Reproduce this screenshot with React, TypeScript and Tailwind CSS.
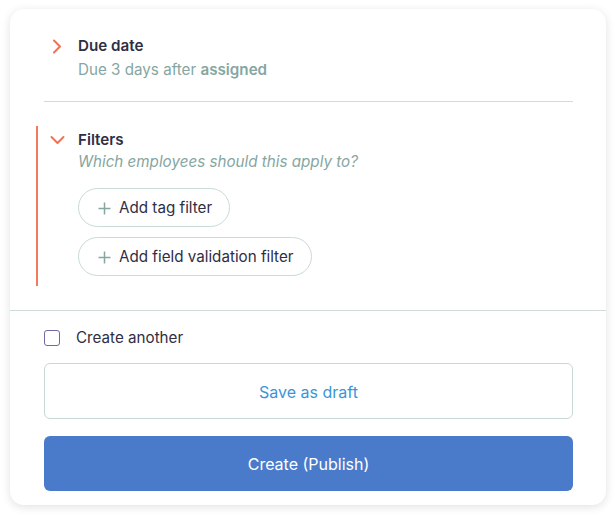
import { useState } from "react";

const ChevronRight = () => (
  <svg width="10" height="15" viewBox="0 0 10 15" fill="none">
    <path d="M2 1.5L8 7.5L2 13.5" stroke="#f4704f" strokeWidth="2" strokeLinecap="round" strokeLinejoin="round" />
  </svg>
);

const ChevronDown = () => (
  <svg width="15" height="10" viewBox="0 0 15 10" fill="none">
    <path d="M1.5 2L7.5 8L13.5 2" stroke="#f4704f" strokeWidth="2" strokeLinecap="round" strokeLinejoin="round" />
  </svg>
);

const Plus = () => (
  <svg width="13" height="13" viewBox="0 0 13 13" fill="none">
    <path d="M6.5 0.5V12.5M0.5 6.5H12.5" stroke="#86a6a2" strokeWidth="1.5" />
  </svg>
);

const FilterButton = ({ label }: { label: string }) => (
  <button className="flex h-[39px] w-fit items-center gap-[8px] rounded-full border border-[#c9dbd7] bg-white pl-[19px] pr-[17px] pt-px text-[15.2px] text-[#2f2e45]">
    <Plus />
    <span>{label}</span>
  </button>
);

const App = () => {
  const [another, setAnother] = useState(false);

  return (
    <div className="min-h-[516px] bg-white px-[10px] pt-[9px] font-['Inter',sans-serif]">
      <div className="h-[496px] w-[596px] rounded-[14px] bg-white shadow-[0_2px_10px_rgba(0,0,0,0.12)]">
        {/* Due date */}
        <div className="pl-[34px] pr-[33px] pt-[26px]">
          <div className="flex">
            <div className="w-[34px] pl-[8px] pt-[4px]">
              <ChevronRight />
            </div>
            <div>
              <div className="text-[15.2px] font-semibold leading-[22px] text-[#2f2e45]">Due date</div>
              <div className="mt-[2px] text-[15.2px] leading-[22px] text-[#86a6a2]">
                Due 3 days after <span className="font-semibold">assigned</span>
              </div>
            </div>
          </div>
          <div className="mt-[20px] h-px bg-[#cfdcda]" />
        </div>

        {/* Filters */}
        <div className="ml-[26px] mt-[24px] flex border-l-2 border-[#f47a5a] pb-[10px] pt-[2px]">
          <div className="w-[40px] pl-[12px] pt-[7px]">
            <ChevronDown />
          </div>
          <div>
            <div className="pt-px text-[15.2px] font-semibold leading-[22px] text-[#2f2e45]">Filters</div>
            <div className="text-[15.2px] italic leading-[22px] text-[#86a6a2]">
              Which employees should this apply to?
            </div>
            <div className="mt-[15px] flex flex-col gap-[10px]">
              <FilterButton label="Add tag filter" />
              <FilterButton label="Add field validation filter" />
            </div>
          </div>
        </div>

        <div className="mt-[24px] h-px bg-[#cfdcda]" />

        {/* Footer */}
        <div className="pl-[34px] pr-[33px]">
          <label className="mt-[16px] flex h-[22px] items-center gap-[16px]">
            <input
              type="checkbox"
              checked={another}
              onChange={() => setAnother(!another)}
              className="h-[16px] w-[16px] appearance-none rounded-[3px] border border-[#6e6aa0] bg-white"
            />
            <span className="text-[15.2px] text-[#2f2e45]">Create another</span>
          </label>
          <button className="mt-[14px] flex h-[56px] w-full items-center justify-center rounded-[6px] border border-[#c9d8d6] bg-white pt-px text-[16px] text-[#3a95d8]">
            Save as draft
          </button>
          <button className="mt-[17px] flex h-[55px] w-full items-center justify-center rounded-[6px] bg-[#4a7bca] pt-px text-[16px] text-white">
            Create (Publish)
          </button>
        </div>
      </div>
    </div>
  );
};

export default App;
